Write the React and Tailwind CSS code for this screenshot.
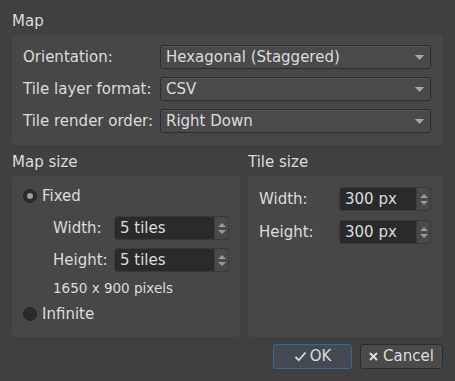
import { useState } from 'react';

function Combo({ value }) {
    return (
        <div className="h-[24px] flex items-center justify-between rounded-[3px] border border-[#2c2c2c] bg-[#4a4a4a] pl-[5px] pr-[6px] shadow-[inset_0_1px_0_#555]">
            <span className="leading-none">{value}</span>
            <svg width="9" height="5" viewBox="0 0 9 5">
                <path d="M0 0 L9 0 L4.5 5 Z" fill="#a8a8a8" />
            </svg>
        </div>
    );
}

function SpinBox({ value }) {
    return (
        <div className="h-[24px] flex items-stretch rounded-[3px] border border-[#3a3a3a] bg-[#2a2a2a]">
            <span className="flex-1 flex items-center pl-[5px] leading-none">{value}</span>
            <div className="w-[14px] flex flex-col items-center justify-center gap-[3px] border-l border-[#3c3c3c] bg-[#4a4a4a] rounded-r-[2px]">
                <svg width="8" height="4" viewBox="0 0 8 4">
                    <path d="M0 4 L8 4 L4 0 Z" fill="#9a9a9a" />
                </svg>
                <svg width="8" height="4" viewBox="0 0 8 4">
                    <path d="M0 0 L8 0 L4 4 Z" fill="#9a9a9a" />
                </svg>
            </div>
        </div>
    );
}

function Radio({ checked, label, onClick }) {
    return (
        <div className="h-[20px] flex items-center cursor-pointer" onClick={onClick}>
            <span className="w-[14px] h-[14px] rounded-full bg-[#2a2a2a] border border-[#262626] flex items-center justify-center">
                {checked && <span className="w-[6px] h-[6px] rounded-full bg-[#9c9c9c]" />}
            </span>
            <span className="ml-[5px] leading-none">{label}</span>
        </div>
    );
}

export default function App() {
    const [mode, setMode] = useState('fixed');

    return (
        <div
            className="w-[455px] h-[381px] bg-[#404040] text-[#dcdcdc] text-[15px] px-[12px] pt-[11px] flex flex-col"
            style={{ fontFamily: '"DejaVu Sans", sans-serif' }}
        >
            <div className="h-[24px] leading-[20px]">Map</div>
            <div className="rounded-[3px] bg-[#474747] pl-[11px] pr-[12px] pt-[10px] pb-[12px] grid grid-cols-[137px_1fr] gap-y-[8px] items-center">
                <span>Orientation:</span>
                <Combo value="Hexagonal (Staggered)" />
                <span>Tile layer format:</span>
                <Combo value="CSV" />
                <span>Tile render order:</span>
                <Combo value="Right Down" />
            </div>

            <div className="mt-[7px] grid grid-cols-[228px_1fr] gap-x-[8px]">
                <div>
                    <div className="h-[24px] leading-[20px]">Map size</div>
                    <div className="h-[161px] rounded-[3px] bg-[#474747] pl-[11px] pr-[11px] pt-[10px]">
                        <Radio checked={mode === 'fixed'} label="Fixed" onClick={() => setMode('fixed')} />
                        <div className="pl-[30px] mt-[10px] grid grid-cols-[61px_1fr] gap-y-[8px] items-center">
                            <span>Width:</span>
                            <SpinBox value="5 tiles" />
                            <span>Height:</span>
                            <SpinBox value="5 tiles" />
                        </div>
                        <div className="pl-[30px] mt-[6px] h-[20px] flex items-center text-[13.5px]">1650 x 900 pixels</div>
                        <div className="mt-[6px]">
                            <Radio checked={mode === 'infinite'} label="Infinite" onClick={() => setMode('infinite')} />
                        </div>
                    </div>
                </div>
                <div>
                    <div className="h-[24px] leading-[20px] pl-[-1px]">Tile size</div>
                    <div className="h-[161px] rounded-[3px] bg-[#474747] pl-[11px] pr-[12px] pt-[11px] grid grid-cols-[80px_1fr] gap-y-[9px] content-start items-center">
                        <span>Width:</span>
                        <SpinBox value="300 px" />
                        <span>Height:</span>
                        <SpinBox value="300 px" />
                    </div>
                </div>
            </div>

            <div className="mt-[7px] flex justify-end gap-[8px]">
                <button className="w-[79px] h-[25px] rounded-[3px] border border-[#2f6c9e] bg-[#434a51] flex items-center justify-center gap-[3px]">
                    <svg width="13" height="11" viewBox="0 0 13 11">
                        <path d="M1.5 6 L4.8 9.3 L11.5 1.5" fill="none" stroke="#dcdcdc" strokeWidth="1.8" />
                    </svg>
                    <span className="leading-none">OK</span>
                </button>
                <button className="w-[83px] h-[25px] rounded-[3px] border border-[#2c2c2c] bg-[#4a4a4a] flex items-center justify-center gap-[5px]">
                    <svg width="9" height="9" viewBox="0 0 9 9">
                        <path d="M1 1 L8 8 M8 1 L1 8" stroke="#dcdcdc" strokeWidth="2" />
                    </svg>
                    <span className="leading-none">Cancel</span>
                </button>
            </div>
        </div>
    );
}
